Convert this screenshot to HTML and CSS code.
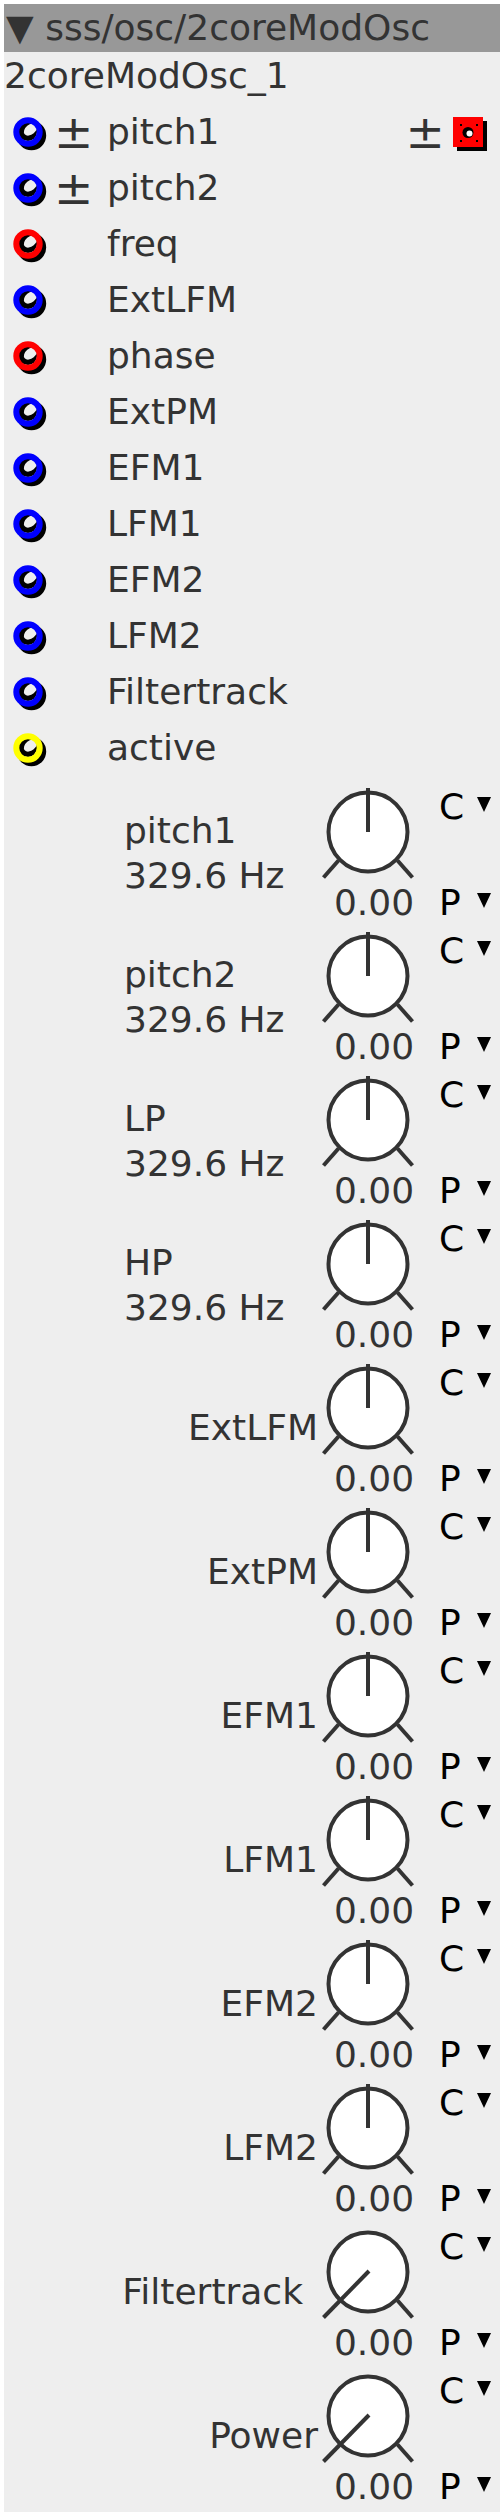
FILE: index.html
```html
<!DOCTYPE html>
<html lang="en">
<head>
  <meta charset="UTF-8">
  <title>sss/osc/2coreModOsc</title>
  <link rel="stylesheet" href="styles.css">
</head>
<body>
  <svg class="defs" width="0" height="0">
    <symbol id="ring" viewBox="0 0 48 56">
      <circle cx="27.5" cy="31.5" r="11.7" fill="none" stroke="#000" stroke-width="6"/>
      <circle cx="24" cy="28" r="9" fill="#000"/>
      <ellipse cx="26.5" cy="25.5" rx="7.5" ry="5" fill="#eee" transform="rotate(-40 26.5 25.5)"/>
      <circle cx="24" cy="28" r="11.7" fill="none" stroke="currentColor" stroke-width="6"/>
    </symbol>
    <symbol id="knob-mid" viewBox="0 0 100 104">
      <circle cx="50" cy="53" r="39.5" fill="#fff" stroke="#333" stroke-width="4"/>
      <line x1="50" y1="53" x2="50" y2="9" stroke="#333" stroke-width="4"/>
      <line x1="20.5" y1="81.5" x2="5.5" y2="98.5" stroke="#333" stroke-width="4"/>
      <line x1="79.5" y1="81.5" x2="94.5" y2="98.5" stroke="#333" stroke-width="4"/>
    </symbol>
    <symbol id="knob-min" viewBox="0 0 100 104">
      <circle cx="50" cy="53" r="39.5" fill="#fff" stroke="#333" stroke-width="4"/>
      <line x1="51" y1="52" x2="5.5" y2="98.5" stroke="#333" stroke-width="4"/>
      <line x1="79.5" y1="81.5" x2="94.5" y2="98.5" stroke="#333" stroke-width="4"/>
    </symbol>
  </svg>

  <div class="module">
    <div class="module-title">▼ sss/osc/2coreModOsc</div>
    <div class="instance-name">2coreModOsc_1</div>

    <!-- ports -->
    <div class="ports">
      <div class="port">
        <svg class="ring blue"><use href="#ring"/></svg>
        <span class="pm">±</span>
        <span class="port-name">pitch1</span>
        <div class="port-extra">
          <span class="pm pm-right">±</span>
          <svg class="out-box" width="34" height="34" viewBox="0 0 34 34">
            <rect x="4" y="4" width="30" height="30" fill="#000"/>
            <rect x="0" y="0" width="30" height="30" fill="#f00"/>
            <rect x="7" y="7" width="2" height="2" fill="#000"/>
            <rect x="23" y="7" width="2" height="2" fill="#000"/>
            <rect x="7" y="23" width="2" height="2" fill="#000"/>
            <rect x="23" y="23" width="2" height="2" fill="#000"/>
            <circle cx="15" cy="15.5" r="5.5" fill="#000"/>
            <circle cx="16.5" cy="16.5" r="3" fill="#fff"/>
          </svg>
        </div>
      </div>
      <div class="port">
        <svg class="ring blue"><use href="#ring"/></svg>
        <span class="pm">±</span>
        <span class="port-name">pitch2</span>
      </div>
      <div class="port">
        <svg class="ring red"><use href="#ring"/></svg>
        <span class="pm"></span>
        <span class="port-name">freq</span>
      </div>
      <div class="port">
        <svg class="ring blue"><use href="#ring"/></svg>
        <span class="pm"></span>
        <span class="port-name">ExtLFM</span>
      </div>
      <div class="port">
        <svg class="ring red"><use href="#ring"/></svg>
        <span class="pm"></span>
        <span class="port-name">phase</span>
      </div>
      <div class="port">
        <svg class="ring blue"><use href="#ring"/></svg>
        <span class="pm"></span>
        <span class="port-name">ExtPM</span>
      </div>
      <div class="port">
        <svg class="ring blue"><use href="#ring"/></svg>
        <span class="pm"></span>
        <span class="port-name">EFM1</span>
      </div>
      <div class="port">
        <svg class="ring blue"><use href="#ring"/></svg>
        <span class="pm"></span>
        <span class="port-name">LFM1</span>
      </div>
      <div class="port">
        <svg class="ring blue"><use href="#ring"/></svg>
        <span class="pm"></span>
        <span class="port-name">EFM2</span>
      </div>
      <div class="port">
        <svg class="ring blue"><use href="#ring"/></svg>
        <span class="pm"></span>
        <span class="port-name">LFM2</span>
      </div>
      <div class="port">
        <svg class="ring blue"><use href="#ring"/></svg>
        <span class="pm"></span>
        <span class="port-name">Filtertrack</span>
      </div>
      <div class="port">
        <svg class="ring yellow"><use href="#ring"/></svg>
        <span class="pm"></span>
        <span class="port-name">active</span>
      </div>
    </div>

    <!-- knobs -->
    <div class="knobs">
      <div class="knob-row">
        <div class="knob-label two-line"><div>pitch1<br>329.6 Hz</div></div>
        <div class="knob"><svg class="dial"><use href="#knob-mid"/></svg><div class="value">0.00</div></div>
        <div class="modes"><div class="mode top"><span class="letter">C</span><span class="tri"></span></div><div class="mode"><span class="letter">P</span><span class="tri"></span></div></div>
      </div>
      <div class="knob-row">
        <div class="knob-label two-line"><div>pitch2<br>329.6 Hz</div></div>
        <div class="knob"><svg class="dial"><use href="#knob-mid"/></svg><div class="value">0.00</div></div>
        <div class="modes"><div class="mode top"><span class="letter">C</span><span class="tri"></span></div><div class="mode"><span class="letter">P</span><span class="tri"></span></div></div>
      </div>
      <div class="knob-row">
        <div class="knob-label two-line"><div>LP<br>329.6 Hz</div></div>
        <div class="knob"><svg class="dial"><use href="#knob-mid"/></svg><div class="value">0.00</div></div>
        <div class="modes"><div class="mode top"><span class="letter">C</span><span class="tri"></span></div><div class="mode"><span class="letter">P</span><span class="tri"></span></div></div>
      </div>
      <div class="knob-row">
        <div class="knob-label two-line"><div>HP<br>329.6 Hz</div></div>
        <div class="knob"><svg class="dial"><use href="#knob-mid"/></svg><div class="value">0.00</div></div>
        <div class="modes"><div class="mode top"><span class="letter">C</span><span class="tri"></span></div><div class="mode"><span class="letter">P</span><span class="tri"></span></div></div>
      </div>
      <div class="knob-row">
        <div class="knob-label">ExtLFM</div>
        <div class="knob"><svg class="dial"><use href="#knob-mid"/></svg><div class="value">0.00</div></div>
        <div class="modes"><div class="mode top"><span class="letter">C</span><span class="tri"></span></div><div class="mode"><span class="letter">P</span><span class="tri"></span></div></div>
      </div>
      <div class="knob-row">
        <div class="knob-label">ExtPM</div>
        <div class="knob"><svg class="dial"><use href="#knob-mid"/></svg><div class="value">0.00</div></div>
        <div class="modes"><div class="mode top"><span class="letter">C</span><span class="tri"></span></div><div class="mode"><span class="letter">P</span><span class="tri"></span></div></div>
      </div>
      <div class="knob-row">
        <div class="knob-label">EFM1</div>
        <div class="knob"><svg class="dial"><use href="#knob-mid"/></svg><div class="value">0.00</div></div>
        <div class="modes"><div class="mode top"><span class="letter">C</span><span class="tri"></span></div><div class="mode"><span class="letter">P</span><span class="tri"></span></div></div>
      </div>
      <div class="knob-row">
        <div class="knob-label">LFM1</div>
        <div class="knob"><svg class="dial"><use href="#knob-mid"/></svg><div class="value">0.00</div></div>
        <div class="modes"><div class="mode top"><span class="letter">C</span><span class="tri"></span></div><div class="mode"><span class="letter">P</span><span class="tri"></span></div></div>
      </div>
      <div class="knob-row">
        <div class="knob-label">EFM2</div>
        <div class="knob"><svg class="dial"><use href="#knob-mid"/></svg><div class="value">0.00</div></div>
        <div class="modes"><div class="mode top"><span class="letter">C</span><span class="tri"></span></div><div class="mode"><span class="letter">P</span><span class="tri"></span></div></div>
      </div>
      <div class="knob-row">
        <div class="knob-label">LFM2</div>
        <div class="knob"><svg class="dial"><use href="#knob-mid"/></svg><div class="value">0.00</div></div>
        <div class="modes"><div class="mode top"><span class="letter">C</span><span class="tri"></span></div><div class="mode"><span class="letter">P</span><span class="tri"></span></div></div>
      </div>
      <div class="knob-row">
        <div class="knob-label narrow">Filtertrack</div>
        <div class="knob"><svg class="dial"><use href="#knob-min"/></svg><div class="value">0.00</div></div>
        <div class="modes"><div class="mode top"><span class="letter">C</span><span class="tri"></span></div><div class="mode"><span class="letter">P</span><span class="tri"></span></div></div>
      </div>
      <div class="knob-row">
        <div class="knob-label">Power</div>
        <div class="knob"><svg class="dial"><use href="#knob-min"/></svg><div class="value">0.00</div></div>
        <div class="modes"><div class="mode top"><span class="letter">C</span><span class="tri"></span></div><div class="mode"><span class="letter">P</span><span class="tri"></span></div></div>
      </div>
    </div>
  </div>
</body>
</html>
```

FILE: styles.css
```css
body {
  margin: 4px;
  background-color: #fff;
  font-family: "DejaVu Sans", sans-serif;
  font-size: 36px;
  color: #333;
}
.defs {
  position: absolute;
  width: 0;
  height: 0;
}
.module {
  background-color: #eee;
  padding-bottom: 5px;
}
.module-title {
  background-color: #989898;
  height: 48px;
  line-height: 48px;
  padding-left: 2px;
  white-space: nowrap;
}
.instance-name {
  height: 48px;
  line-height: 48px;
  white-space: nowrap;
}
.ports {
  margin-top: 4px;
}
.port {
  display: flex;
  align-items: center;
  height: 56px;
  line-height: 56px;
}
.ring {
  width: 48px;
  height: 56px;
  flex-shrink: 0;
}
.ring.blue { color: #00f; }
.ring.red { color: #f00; }
.ring.yellow { color: #ff0; }
.pm {
  width: 55px;
  padding-left: 2px;
  box-sizing: border-box;
  flex-shrink: 0;
  font-size: 47px;
  line-height: 56px;
}
.port-extra {
  margin-left: auto;
  display: flex;
  align-items: center;
  padding-right: 13px;
}
.pm.pm-right {
  width: auto;
  margin-right: 8px;
}
.out-box {
  display: block;
  margin-top: 4px;
}
.knobs {
  margin-top: 3px;
}
.knob-row {
  display: flex;
  height: 144px;
}
.knob-label {
  width: 314px;
  display: flex;
  align-items: center;
  justify-content: flex-end;
  line-height: 45px;
  white-space: nowrap;
}
.knob-label.narrow {
  padding-right: 15px;
  box-sizing: border-box;
}
.knob-label.two-line {
  justify-content: flex-start;
  padding-left: 120px;
  padding-top: 4px;
  box-sizing: border-box;
}
.knob {
  width: 112px;
  display: flex;
  flex-direction: column;
}
.dial {
  display: block;
  width: 100px;
  height: 104px;
}
.value {
  height: 40px;
  line-height: 40px;
  text-align: center;
}
.modes {
  margin-left: 9px;
  display: flex;
  flex-direction: column;
  justify-content: space-between;
  color: #000;
}
.mode {
  display: flex;
  align-items: baseline;
  height: 40px;
  line-height: 40px;
}
.mode.top {
  margin-top: 8px;
}
.letter {
  display: inline-block;
  width: 38px;
}
.tri {
  display: inline-block;
  width: 0;
  height: 0;
  border-left: 7.5px solid transparent;
  border-right: 7.5px solid transparent;
  border-top: 15px solid #000;
  position: relative;
  top: -7px;
}
```
